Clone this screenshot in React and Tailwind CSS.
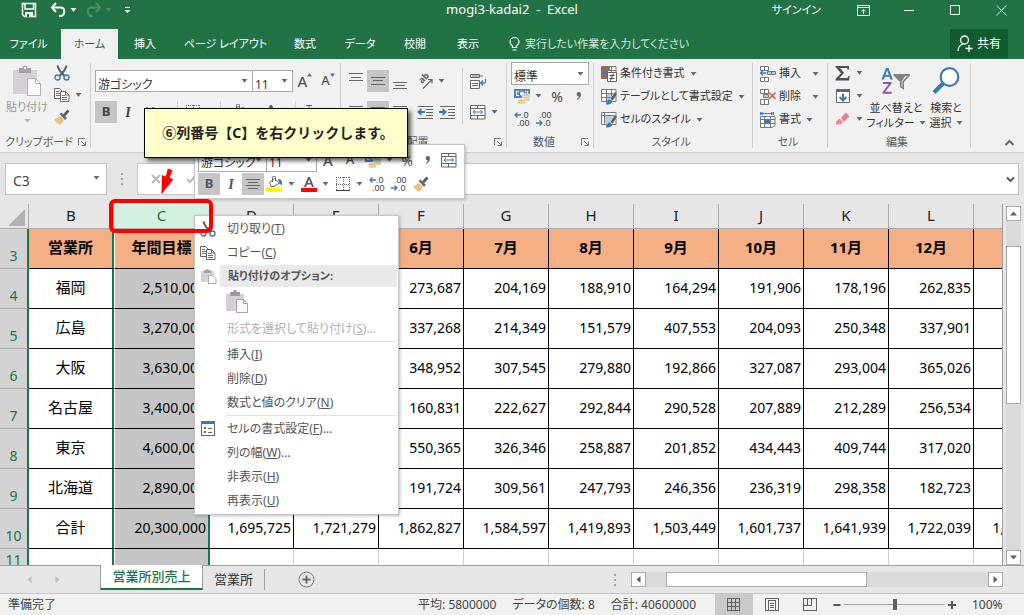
import React from "react";

const GRAY = "#666666";
const BLUE = "#3c7ab5";

/* ---------- icons ---------- */

function Caret({ color = "#6a6a6a", className = "" }) {
  return (
    <svg width="7" height="4" viewBox="0 0 7 4" className={"shrink-0 " + className} aria-hidden="true">
      <path d="M0.5 0h6L3.5 3.8z" fill={color} />
    </svg>
  );
}

function Svg({ w = 16, h = 16, children, className = "", crisp = false }) {
  return (
    <svg
      width={w}
      height={h}
      viewBox={`0 0 ${w} ${h}`}
      fill="none"
      className={"shrink-0 " + className}
      shapeRendering={crisp ? "crispEdges" : "auto"}
      aria-hidden="true"
    >
      {children}
    </svg>
  );
}

const CutIcon = () => (
  <Svg>
    <path d="M3.5 0.5C4 3 6 6.500 10.500 11M12.500 0.500C12 3 10 6.500 5.500 11" stroke="#606060" strokeWidth="2" />
    <circle cx="3.500" cy="12.500" r="2.500" stroke={BLUE} strokeWidth="1.400" />
    <circle cx="12.500" cy="12.500" r="2.500" stroke={BLUE} strokeWidth="1.400" />
  </Svg>
);

const CopyIcon = () => (
  <Svg>
    <path d="M0.500 1.500h5l3 3v7h-8z" fill="#fff" stroke={GRAY} />
    <path d="M2 4.500h3M2 6.500h4M2 8.500h4" stroke={BLUE} />
    <path d="M6.500 4.500h5l3.500 3.500v6.500h-8.500z" fill="#fff" stroke={GRAY} />
    <path d="M11.500 4.500v3.500h3.500" stroke={GRAY} />
    <path d="M8 8.500h3M8 10.500h5M8 12.500h5" stroke={BLUE} />
  </Svg>
);

const PainterIcon = () => (
  <Svg>
    <path d="M0 10c2.500 0 4-1.500 5.500-3.500l4.500 4.500-3.500 5C4 15 1.500 13 0 10z" fill="#edc07d" />
    <path d="M5.500 5l2-1.500 5.500 5.500-2 2z" fill="#6a6a6a" />
    <path d="M9 5.500L13.500 0.500l2 2L11 7.500z" fill="#5b5b5b" />
  </Svg>
);

const PasteIcon = () => (
  <Svg w={30} h={32}>
    <path d="M1 5h24v24H1z" fill="#d5d0d5" />
    <path d="M7 3h3.500a2.500 2.500 0 0 1 5 0H19v5H7z" fill="#a3a3a3" />
    <circle cx="13" cy="3" r="1.300" fill="#f0f0f0" />
    <path d="M15.500 13.500h8l5 5v12h-13z" fill="#faf8fb" stroke="#b5b1b5" />
    <path d="M23.500 13.500v5h5" stroke="#b5b1b5" />
  </Svg>
);

const PasteMedIcon = () => (
  <Svg w={22} h={24}>
    <path d="M0 4h18v17H0z" fill="#d5d0d5" />
    <path d="M4 2h3a2 2 0 0 1 4 0h3v4H4z" fill="#9b9b9b" />
    <path d="M10.500 9.500h7l4 4v9h-11z" fill="#faf8fb" stroke="#aaa6aa" />
    <path d="M17.500 9.500v4h4" stroke="#aaa6aa" />
  </Svg>
);

const PasteSmallIcon = () => (
  <Svg>
    <path d="M0 3h13v11H0z" fill="#d5d0d5" />
    <path d="M3 2h2.500a1 1 0 0 1 2 0H10v3H3z" fill="#a3a3a3" />
    <path d="M7.500 7.500h4l3.500 3v5h-7.500z" fill="#fff" stroke="#aaa6aa" />
  </Svg>
);

function LinesIcon({ rows }) {
  return (
    <Svg crisp>
      {rows.map(([x, y, w]) => (
        <rect key={y} x={x} y={y} width={w} height="1" fill="#666" />
      ))}
    </Svg>
  );
}
const TopAlign = () => <LinesIcon rows={[[1, 0, 14], [3, 4, 10], [1, 7, 14]]} />;
const MidAlign = () => <LinesIcon rows={[[1, 4, 14], [3, 7, 10], [1, 11, 14]]} />;
const BottomAlign = () => <LinesIcon rows={[[1, 9, 14], [3, 12, 10], [1, 15, 14]]} />;
const LeftAlign = () => <LinesIcon rows={[[1, 2, 14], [1, 5, 10], [1, 8, 14], [1, 11, 10], [1, 14, 14]]} />;
const CenterAlign = () => <LinesIcon rows={[[1, 3, 14], [3, 6, 10], [1, 9, 14], [3, 12, 10]]} />;
const RightAlign = () => <LinesIcon rows={[[1, 2, 14], [5, 5, 10], [1, 8, 14], [5, 11, 10], [1, 14, 14]]} />;

const IndentIcon = ({ right = false }) => (
  <Svg>
    <path d="M1 2.500h15M9 5.500h7M9 8.500h7M9 11.500h7M1 14.500h15" stroke={GRAY} />
    {right ? (
      <path d="M0 7h3.500V4l4.500 4-4.500 4V9H0z" fill={BLUE} />
    ) : (
      <path d="M8 7H4.500V4L0 8l4.500 4V9H8z" fill={BLUE} />
    )}
  </Svg>
);

const OrientationIcon = () => (
  <Svg>
    <text x="0" y="0" fontSize="9" fontFamily="Noto Sans" fontWeight="bold" fill="#606060" transform="translate(5 11) rotate(-45)">
      ab
    </text>
    <path d="M6 15.500L14.500 7M11 6.500h4v4" stroke={GRAY} strokeWidth="1.200" />
  </Svg>
);

const WrapIcon = () => (
  <Svg>
    <path d="M0.500 1.500h9v3h-9zM0.500 7.500h9v8h-9z" stroke={GRAY} fill="#fff" />
    <path d="M2 3h11M2 10.500h6M2 12.500h6" stroke={BLUE} />
    <path d="M15.500 6v2.500q0 1.500-2 1.500H11M13 7.500L10.500 10l2.500 2.500" stroke={BLUE} strokeWidth="1.300" />
  </Svg>
);

const MergeIcon = () => (
  <Svg>
    <path d="M0.500 1.500h14.500v13.500H0.500zM0.500 4.500h14.500M0.500 11.500h14.500M7.500 1.500v3M7.500 11.500v3.500" stroke={GRAY} fill="#fff" />
    <path d="M3 8h9.500M5 6L3 8l2 2M10.500 6l2 2-2 2" stroke={BLUE} />
  </Svg>
);

const CommaIcon = () => (
  <Svg w={8} h={10}>
    <path d="M3.800 1a2.200 2.200 0 0 1 2.200 2.300C6 6 4.500 7.800 2.300 8.800L1.800 7.800C3 7.200 3.700 6.400 3.900 5.400A2.200 2.200 0 0 1 3.800 1z" fill="#666" />
  </Svg>
);

const CurrencyIcon = () => (
  <Svg>
    <path d="M0 1h16v9H0z" fill="#4a86c5" />
    <path d="M2 3h3v1H3v3h2v1H2zM14 3h-3v1h2v1h1z" fill="#fff" />
    <circle cx="8" cy="5.500" r="2" fill="#fff" />
    <g fill="#edc07d" stroke="#f1f1f1" strokeWidth="0.700">
      <ellipse cx="12" cy="11.500" rx="4" ry="1.600" />
      <ellipse cx="12" cy="9.300" rx="4" ry="1.600" />
      <ellipse cx="12" cy="7.200" rx="4" ry="1.600" />
      <ellipse cx="7.500" cy="14.500" rx="4" ry="1.500" />
      <ellipse cx="7.500" cy="12.500" rx="4" ry="1.500" />
    </g>
  </Svg>
);

const DecimalIcon = ({ less = false }) => (
  <Svg>
    <g fontFamily="Liberation Sans" fontSize="9" fill="#444">
      <text x={less ? 3 : 7} y="7">{less ? ".00" : ".0"}</text>
      <text x={less ? 7 : 3} y="15">{less ? ".0" : ".00"}</text>
    </g>
    {less ? (
      <path d="M0 12h6M3.500 9.500L6 12l-2.500 2.500" stroke={BLUE} strokeWidth="1.300" />
    ) : (
      <path d="M1 4h6M3.500 1.500L1 4l2.500 2.500" stroke={BLUE} strokeWidth="1.300" />
    )}
  </Svg>
);

const BorderIcon = () => (
  <Svg crisp>
    <path d="M1 1.500h14M1 8.500h14M1.500 1v13M8.500 1v13M14.500 1v13" stroke={GRAY} strokeDasharray="1 1" />
    <path d="M1 14.500h14" stroke="#444" />
  </Svg>
);

const BucketIcon = () => (
  <Svg w={17}>
    <path d="M3.500 6.500l5-4 5 4.500-5.500 3.500H5z" fill="#fff" stroke={GRAY} />
    <path d="M6.500 6V1.500a1.500 1.500 0 0 1 3 0V5" stroke={GRAY} />
    <path d="M12 3c3 0 4.500 2 4 6l-2.500-1z" fill={BLUE} />
    <path d="M0 12h16v4H0z" fill="#ffff00" />
  </Svg>
);

const FontColorIcon = () => (
  <Svg>
    <path d="M3 11L7 1h2l4 10h-2l-1-2.500H6L5 11zM6.700 7h2.700L8 3.300z" fill="#5a5a5a" />
    <path d="M0 12h16v4H0z" fill="#ff0000" />
  </Svg>
);

const RubyIcon = () => (
  <Svg>
    <path d="M6 1.500h6M5 4.500h7M9 1v3" stroke={GRAY} />
    <path d="M3 8h10M8 6v9M4 14l4-4 4 4" stroke={GRAY} />
  </Svg>
);

const GridBase = () => (
  <>
    <path d="M0.500 0.500h14v12H0.500z" fill="#fff" />
    <path d="M0.500 0.500h14.500v12H0.500zM0.500 4.500h14.500M0.500 8.500h14.500M5.500 0.500v12M10.500 0.500v12" stroke="#777" />
  </>
);

const ConditionalIcon = () => (
  <Svg>
    <GridBase />
    <path d="M1 1h8v3H1zM1 9h4v3H1z" fill="#d8512f" />
    <path d="M1 5h6v3H1z" fill={BLUE} />
    <path d="M6.500 6.500h9v9h-9z" fill="#fff" stroke={GRAY} />
    <path d="M8.500 9.500h5M8.500 12.500h5M12.500 7.500l-3 7" stroke="#444" />
  </Svg>
);

const BrushOverlay = () => (
  <>
    <path d="M5 15.500c0-3 1.500-5 4-5l2 2c0 2-2.500 3.500-6 3z" fill={BLUE} />
    <path d="M9 10L14 2.500l2 1.500v2L11.500 12z" fill="#606060" stroke="#f1f1f1" strokeWidth="0.600" />
  </>
);

const TableStyleIcon = () => (
  <Svg>
    <GridBase />
    <path d="M6 5h4v3H6zM6 9h4v3H6zM11 5h4v3h-4z" fill="#b4cde6" />
    <BrushOverlay />
  </Svg>
);

const CellStyleIcon = () => (
  <Svg>
    <path d="M0.500 0.500h14.500v12H0.500z" fill="#fff" stroke="#777" />
    <path d="M0.500 3.500h14.500M3.500 0.500v12" stroke="#777" />
    <path d="M4 4h9v7H4z" fill="#b4cde6" />
    <BrushOverlay />
  </Svg>
);

const InsertCellIcon = () => (
  <Svg>
    <path d="M0.500 0.500h8v4h-8zM4.500 0.500v4M0.500 11.500h8v4h-8zM4.500 11.500v4" stroke="#777" fill="#fff" />
    <path d="M7.500 5.500h8v3h-8zM11.500 5.500v3" stroke="#777" fill="#b4cde6" />
    <path d="M6.500 7h-6M3 4.500L0.500 7 3 9.500" stroke={BLUE} strokeWidth="1.500" />
  </Svg>
);

const DeleteCellIcon = () => (
  <Svg>
    <path d="M0.500 0.500h8v4h-8zM4.500 0.500v4M0.500 10.500h8v5h-8zM4.500 10.500v5" stroke="#777" fill="#fff" />
    <path d="M3.500 5.500h5v3h-5z" stroke="#777" fill="#b4cde6" />
    <path d="M9 3.500l6.500 6.500M15.500 3.500L9 10" stroke="#d8623f" strokeWidth="1.600" />
  </Svg>
);

const FormatCellIcon = () => (
  <Svg>
    <path d="M1 1.500h12M3 0L1 1.500 3 3M11 0l2 1.500L11 3M0.500 0v3M13.500 0v3" stroke={BLUE} />
    <path d="M0.500 4.500h14.500v9l-3 2H0.500zM0.500 7.500h14.500M0.500 11.500h14.500M4.500 4.500v11M10.500 4.500v11" stroke="#777" fill="#fff" />
    <path d="M4 7h6v4H4z" fill={BLUE} />
  </Svg>
);

const SigmaIcon = () => (
  <Svg>
    <path d="M0.500 1H14v3.500h-1.200L12 3H5l4 4.700L4.500 13H12.500l1-2h1.200L14 15.500H0.500V14L6 8.200 0.500 2z" fill="#4f4f4f" />
  </Svg>
);

const FillIcon = () => (
  <Svg>
    <path d="M1.500 1.500h13v13h-13z" fill="#fff" stroke={GRAY} />
    <path d="M1 1h14v3H1z" fill={GRAY} />
    <path d="M8 5.500v7M4.500 9L8 12.500 11.500 9" stroke={BLUE} strokeWidth="2" />
  </Svg>
);

const EraserIcon = () => (
  <Svg>
    <path d="M6 6.500L11 1.500l3.500 4L8.500 11z" fill="#e67d92" />
    <path d="M4.500 7.500l3.500 4L5.500 13.500 1 13.500v-3z" fill="#e9899c" />
  </Svg>
);

const SortIcon = () => (
  <Svg w={30} h={28}>
    <path d="M0.500 12.500L5 1h2.400l4.400 11.500H9.400l-1-2.800H3.900l-1 2.800zM4.500 8h3.300L6.200 3.200z" fill={BLUE} />
    <path d="M2 15h8.500v1.500L4.200 24.800h6.500v2H1.500v-1.600l6.200-8.200H2z" fill="#9152b8" />
    <path d="M12.500 7h16.500v1.500L23 15v8l-4-3v-5l-6.500-6.500z" fill="#808080" />
    <path d="M20.500 14.500v5l1 1v-6l5-5.500h-2.500z" fill="#d9d9d9" />
  </Svg>
);

const FindIcon = () => (
  <Svg w={28} h={28}>
    <circle cx="17.500" cy="10" r="8.800" fill="#fff" stroke={BLUE} strokeWidth="2.200" />
    <path d="M11 16.500L2 25.500" stroke={BLUE} strokeWidth="4" />
  </Svg>
);

const Launcher = ({ label }) => (
  <button type="button" aria-label={label} className="shrink-0">
    <Svg w={8} h={8}>
      <path d="M0.500 7V0.500H7" stroke="#777" />
      <path d="M3 3l4 4M7.500 3.500v4h-4" stroke="#777" />
    </Svg>
  </button>
);

/* ---------- shared controls ---------- */

function IconButton({ label, active, caret, className = "", children }) {
  return (
    <button
      type="button"
      aria-label={label}
      className={
        "flex h-[22px] shrink-0 items-center justify-center " + (active ? "bg-[#c5c5c5] " : "") + className
      }
    >
      {children}
      {caret && <Caret className="ml-[5px]" />}
    </button>
  );
}

function Combo({ label, value, className = "" }) {
  return (
    <div className={"relative shrink-0 border border-[#ababab] bg-white " + className}>
      <select aria-label={label} className="h-full w-full appearance-none pb-[3px] pl-[2px] text-[12px] text-[#333] outline-none">
        <option>{value}</option>
      </select>
      <Caret className="pointer-events-none absolute top-1/2 right-[4px] -mt-[2px]" />
    </div>
  );
}

function Group({ label, launcher, className = "", children }) {
  return (
    <section aria-label={label} className={"flex shrink-0 flex-col " + className}>
      <div className="h-[73px] shrink-0">{children}</div>
      <div className="flex h-5 items-center pr-1 text-[11px] text-[#5c5c5c]">
        <span className="flex-1 text-center whitespace-nowrap">{label}</span>
        {launcher && <Launcher label={label + "の設定"} />}
      </div>
    </section>
  );
}

const Divider = () => <div className="my-1 w-px shrink-0 bg-[#d0d0d0]" />;

function TextButton({ icon, text, textWidth = "", caret = true }) {
  return (
    <button type="button" className="flex h-[23px] items-center text-[11px] whitespace-nowrap text-[#333]">
      {icon}
      <span className={"ml-[3px] text-left " + textWidth}>{text}</span>
      {caret && <Caret className="ml-[5px]" />}
    </button>
  );
}

/* ---------- title bar and tabs ---------- */

function TitleBar() {
  return (
    <header className="grid h-[29px] shrink-0 grid-cols-[1fr_auto_1fr] bg-[#217346] pb-[9px] text-white">
      <div className="flex items-center pl-[21px]">
        <button type="button" aria-label="上書き保存">
          <Svg>
            <path d="M1.500 1.500h13v13H3.500l-2-2zM4 2v5h8.500V2" stroke="#fff" strokeWidth="1.500" />
            <path d="M4 10h8v5H4z" fill="#fff" />
            <path d="M6 12h2v3H6z" fill="#217346" />
          </Svg>
        </button>
        <button type="button" aria-label="元に戻す" className="ml-[13px] flex items-center">
          <Svg>
            <path d="M2 5.500h8.500c5 0 5 7.500 0 8.500H9" stroke="#fff" strokeWidth="2" />
            <path d="M6 1L2 5.500 6 10" stroke="#fff" strokeWidth="2" />
          </Svg>
          <Caret color="#fff" className="ml-[4px]" />
        </button>
        <button type="button" aria-label="やり直し" disabled className="ml-[9px] flex items-center">
          <Svg>
            <path d="M14 5.500H5.500c-5 0-5 7.500 0 8.500H7" stroke="#4c9069" strokeWidth="2" />
            <path d="M10 1l4 4.500L10 10" stroke="#4c9069" strokeWidth="2" />
          </Svg>
          <Caret color="#4c9069" className="ml-[3px]" />
        </button>
        <button type="button" aria-label="クイック アクセス ツール バーのカスタマイズ" className="ml-3">
          <Svg w={7} h={8}>
            <path d="M1 1.500h5" stroke="#fff" />
            <path d="M0.500 4h6L3.500 7z" fill="#fff" />
          </Svg>
        </button>
      </div>
      <h1 className="flex items-center text-[13px] whitespace-pre">mogi3-kadai2  -  Excel</h1>
      <div className="flex items-center justify-end pr-[17px]">
        <button type="button" className="mr-9 text-[11px]">サインイン</button>
        <button type="button" aria-label="リボンの表示オプション" className="mr-[34px]">
          <Svg w={13} h={11}>
            <path d="M0.500 0.500h12v10H0.500zM0.500 2.500h12M6.500 9V4.500M4.500 6.500l2-2 2 2" stroke="#fff" />
          </Svg>
        </button>
        <button type="button" aria-label="最小化" className="mr-9">
          <Svg w={10} h={10}><path d="M0 5.500h10" stroke="#fff" /></Svg>
        </button>
        <button type="button" aria-label="最大化" className="mr-9">
          <Svg w={10} h={10}><path d="M0.500 0.500h9v9h-9z" stroke="#fff" /></Svg>
        </button>
        <button type="button" aria-label="閉じる">
          <Svg w={11} h={11}><path d="M0.500 0.500l10 10M10.500 0.500l-10 10" stroke="#fff" /></Svg>
        </button>
      </div>
    </header>
  );
}

const TABS = [
  ["ファイル", "w-[61px] pr-1"],
  ["ホーム", "w-[57px]"],
  ["挿入", "w-[54px]"],
  ["ページ レイアウト", "w-[107px]"],
  ["数式", "w-[52px]"],
  ["データ", "w-[58px]"],
  ["校閲", "w-[52px]"],
  ["表示", "w-[54px]"],
];

function RibbonTabs() {
  return (
    <nav aria-label="リボン タブ" className="flex h-[30px] shrink-0 bg-[#217346] text-[11px] text-white">
      {TABS.map(([name, width]) => (
        <button
          key={name}
          type="button"
          className={
            "shrink-0 whitespace-nowrap " + width + (name === "ホーム" ? " bg-[#f1f1f1] text-[#217346]" : "")
          }
        >
          {name}
        </button>
      ))}
      <button type="button" className="ml-[14px] flex items-center gap-[5px] whitespace-nowrap text-[#d9e9df]">
        <Svg w={11} h={15}>
          <path d="M3.500 10.500V9C1.500 7.500 1 6.500 1 5a4.500 4.500 0 0 1 9 0c0 1.500-0.500 2.500-2.500 4v1.500zM3.500 13h4" stroke="#fff" strokeWidth="1.200" />
        </Svg>
        実行したい作業を入力してください
      </button>
      <div className="flex-1" />
      <button type="button" className="mr-4 mb-px flex w-[58px] items-center justify-center gap-1 bg-[#0f5c2f] text-[12px]">
        <Svg w={16} h={17}>
          <circle cx="7.500" cy="5" r="4" stroke="#fff" strokeWidth="1.300" />
          <path d="M1 16c0-4 2-6 5-7M8.500 13.500h7M12 10v7" stroke="#fff" strokeWidth="1.300" />
        </Svg>
        共有
      </button>
    </nav>
  );
}

/* ---------- ribbon ---------- */

function BigButton({ icon, lines, className = "" }) {
  return (
    <button type="button" className={"flex flex-col items-center text-[11px] leading-[15px] whitespace-nowrap text-[#333] " + className}>
      {icon}
      <span className="mt-[5px]">{lines[0]}</span>
      <span className="flex items-center gap-1">
        {lines[1]}
        <Caret />
      </span>
    </button>
  );
}

function Ribbon() {
  return (
    <div className="flex h-[94px] shrink-0 border-b border-[#d0d0d0] bg-[#f1f1f1]">
      <Group label="クリップボード" launcher className="w-[90px]">
        <div className="flex pl-[5px]">
          <button type="button" disabled className="flex w-11 flex-col items-center pt-[6px] text-[11px] leading-4 whitespace-nowrap text-[#9b9b9b]">
            <PasteIcon />
            <span className="mt-[2px]">貼り付け</span>
            <Caret color="#b5b5b5" className="mt-[4px]" />
          </button>
          <div className="flex flex-col items-start pt-[3px] pl-[5px]">
            <IconButton label="切り取り"><CutIcon /></IconButton>
            <IconButton label="コピー" caret><CopyIcon /></IconButton>
            <IconButton label="書式のコピー/貼り付け"><PainterIcon /></IconButton>
          </div>
        </div>
      </Group>
      <Divider />
      <Group label="フォント" launcher className="w-[249px]">
        <div className="flex flex-col gap-[9px] pt-[11px] pl-1">
          <div className="flex h-[22px]">
            <Combo label="フォント" value="游ゴシック" className="w-[158px]" />
            <Combo label="フォント サイズ" value="11" className="-ml-px w-[41px]" />
            <IconButton label="フォント サイズの拡大" className="ml-[3px] w-[18px] text-[15px] font-medium text-[#555]">
              A
              <Svg w={5} h={4} className="mb-3"><path d="M0 3.500L2.500 0 5 3.500z" fill={BLUE} /></Svg>
            </IconButton>
            <IconButton label="フォント サイズの縮小" className="ml-[5px] w-[18px] text-[13px] font-medium text-[#555]">
              A
              <Svg w={5} h={4} className="mb-3"><path d="M0 0.500h5L2.500 4z" fill={BLUE} /></Svg>
            </IconButton>
          </div>
          <div className="flex h-[22px] items-center text-[#444]">
            <IconButton label="太字" active className="w-[22px] text-[13px] font-bold">B</IconButton>
            <IconButton label="斜体" className="w-[22px] font-serif text-[14px] font-bold italic">I</IconButton>
            <IconButton label="下線" caret className="w-[34px] text-[13px] underline">U</IconButton>
            <div className="ml-1 h-[22px] w-px bg-[#d5d5d5]" />
            <IconButton label="罫線" caret className="ml-[7px]"><BorderIcon /></IconButton>
            <div className="ml-[7px] h-[22px] w-px bg-[#d5d5d5]" />
            <IconButton label="塗りつぶしの色" caret className="ml-[9px]"><BucketIcon /></IconButton>
            <IconButton label="フォントの色" caret className="ml-1"><FontColorIcon /></IconButton>
            <div className="ml-1 h-[22px] w-px bg-[#d5d5d5]" />
            <IconButton label="ふりがな" caret className="ml-1"><RubyIcon /></IconButton>
          </div>
        </div>
      </Group>
      <Divider />
      <Group label="配置" launcher className="w-[165px]">
        <div className="flex pl-1">
          <div className="flex w-[117px] flex-col gap-[9px] pt-[11px]">
            <div className="flex">
              <IconButton label="上揃え" className="w-[22px]"><TopAlign /></IconButton>
              <IconButton label="上下中央揃え" active className="w-[22px]"><MidAlign /></IconButton>
              <IconButton label="下揃え" className="w-[22px]"><BottomAlign /></IconButton>
              <IconButton label="方向" caret className="ml-[6px]"><OrientationIcon /></IconButton>
            </div>
            <div className="flex">
              <IconButton label="左揃え" className="w-[22px]"><LeftAlign /></IconButton>
              <IconButton label="中央揃え" active className="w-[22px]"><CenterAlign /></IconButton>
              <IconButton label="右揃え" className="w-[22px]"><RightAlign /></IconButton>
              <IconButton label="インデントを減らす" className="ml-[3px] w-[22px]"><IndentIcon /></IconButton>
              <IconButton label="インデントを増やす" className="w-[22px]"><IndentIcon right /></IconButton>
            </div>
          </div>
          <div className="mt-[9px] h-14 w-px bg-[#d5d5d5]" />
          <div className="flex flex-col gap-[9px] pt-[11px] pl-[7px]">
            <IconButton label="折り返して全体を表示する" className="w-4"><WrapIcon /></IconButton>
            <IconButton label="セルを結合して中央揃え" caret><MergeIcon /></IconButton>
          </div>
        </div>
      </Group>
      <Divider />
      <Group label="数値" launcher className="w-[86px]">
        <div className="flex flex-col pt-[3px] pl-1 text-[#444]">
          <Combo label="表示形式" value="標準" className="h-[23px] w-[78px]" />
          <div className="flex">
            <IconButton label="通貨表示形式" caret className="ml-[3px]"><CurrencyIcon /></IconButton>
            <IconButton label="パーセント スタイル" className="ml-[4px] w-[22px] text-[14px]">%</IconButton>
            <IconButton label="桁区切りスタイル" className="w-[22px]"><CommaIcon /></IconButton>
          </div>
          <div className="mt-px flex">
            <IconButton label="小数点以下の表示桁数を増やす" className="w-[22px]"><DecimalIcon /></IconButton>
            <IconButton label="小数点以下の表示桁数を減らす" className="w-[22px]"><DecimalIcon less /></IconButton>
          </div>
        </div>
      </Group>
      <Divider />
      <Group label="スタイル" className="w-[158px]">
        <div className="flex flex-col items-start pt-[3px] pl-[7px]">
          <TextButton icon={<ConditionalIcon />} text="条件付き書式" />
          <TextButton icon={<TableStyleIcon />} text="テーブルとして書式設定" />
          <TextButton icon={<CellStyleIcon />} text="セルのスタイル" />
        </div>
      </Group>
      <Divider />
      <Group label="セル" className="w-[74px]">
        <div className="flex flex-col items-start pt-[3px] pl-[7px]">
          <TextButton icon={<InsertCellIcon />} text="挿入" textWidth="w-[28px]" />
          <TextButton icon={<DeleteCellIcon />} text="削除" textWidth="w-[28px]" />
          <TextButton icon={<FormatCellIcon />} text="書式" textWidth="w-[22px]" />
        </div>
      </Group>
      <Divider />
      <Group label="編集" className="w-[142px]">
        <div className="flex pl-[7px]">
          <div className="flex flex-col gap-px pt-[3px]">
            <IconButton label="オート SUM" caret><SigmaIcon /></IconButton>
            <IconButton label="フィル" caret><FillIcon /></IconButton>
            <IconButton label="クリア" caret><EraserIcon /></IconButton>
          </div>
          <BigButton icon={<SortIcon />} lines={["並べ替えと", "フィルター"]} className="ml-[6px] w-[54px] pt-2" />
          <BigButton icon={<FindIcon />} lines={["検索と", "選択"]} className="ml-[5px] w-[36px] pt-2" />
        </div>
      </Group>
      <Divider />
      <div className="flex flex-1 items-end justify-end pr-[9px] pb-[6px]">
        <button type="button" aria-label="リボンを折りたたむ">
          <Svg w={11} h={7}><path d="M1.500 6L5.500 2l4 4" stroke="#666" strokeWidth="2" /></Svg>
        </button>
      </div>
    </div>
  );
}

/* ---------- formula bar ---------- */

function FormulaBar() {
  return (
    <div className="flex h-[51px] shrink-0 bg-[#e6e6e6] pt-[10px] pr-[5px] pb-[9px] pl-[5px]">
      <div className="relative w-[102px] shrink-0 border border-[#c6c6c6] bg-white">
        <input aria-label="名前ボックス" defaultValue="C3" className="h-full w-full pt-[2px] pl-[7px] text-[14px] text-[#444] outline-none" />
        <Caret className="pointer-events-none absolute top-[12px] right-[6px]" />
      </div>
      <div className="flex w-[30px] items-center justify-center">
        <Svg w={2} h={12} crisp><path d="M0 0h2v2H0zM0 5h2v2H0zM0 10h2v2H0z" fill="#a6a6a6" /></Svg>
      </div>
      <div className="mr-1 flex w-[96px] shrink-0 items-center gap-[26px] border border-[#c6c6c6] bg-white pl-[13px]">
        <button type="button" aria-label="キャンセル"><Svg w={10} h={10}><path d="M1 1l8 8M9 1L1 9" stroke="#b9b9b9" strokeWidth="2" /></Svg></button>
        <button type="button" aria-label="入力"><Svg w={10} h={10}><path d="M0 5l3 3 6-7" stroke="#b9b9b9" strokeWidth="2" /></Svg></button>
      </div>
      <div className="relative flex-1 border border-[#c6c6c6] bg-white">
        <input aria-label="数式バー" className="h-full w-full pr-6 pl-2 outline-none" />
        <Svg w={9} h={7} className="pointer-events-none absolute top-[12px] right-[3px]">
          <path d="M1 1.500L4.500 5 8 1.500" stroke="#5a5a5a" strokeWidth="2" />
        </Svg>
      </div>
    </div>
  );
}

/* ---------- worksheet ---------- */

const COLS = ["B", "C", "D", "E", "F", "G", "H", "I", "J", "K", "L", ""];
const HEAD = ["営業所", "年間目標", "4月", "5月", "6月", "7月", "8月", "9月", "10月", "11月", "12月", ""];
const ROWS = [
  [4, "福岡", "2,510,000", "", "", "273,687", "204,169", "188,910", "164,294", "191,906", "178,196", "262,835", ""],
  [5, "広島", "3,270,000", "", "", "337,268", "214,349", "151,579", "407,553", "204,093", "250,348", "337,901", ""],
  [6, "大阪", "3,630,000", "", "", "348,952", "307,545", "279,880", "192,866", "327,087", "293,004", "365,026", ""],
  [7, "名古屋", "3,400,000", "", "", "160,831", "222,627", "292,844", "290,528", "207,889", "212,289", "256,534", ""],
  [8, "東京", "4,600,000", "", "", "550,365", "326,346", "258,887", "201,852", "434,443", "409,744", "317,020", ""],
  [9, "北海道", "2,890,000", "", "", "191,724", "309,561", "247,793", "246,356", "236,319", "298,358", "182,723", ""],
  [10, "合計", "20,300,000", "1,695,725", "1,721,279", "1,862,827", "1,584,597", "1,419,893", "1,503,449", "1,601,737", "1,641,939", "1,722,039", "1,700,000"],
];

const colEdge = (i) =>
  i < 2 ? "border-r-2 border-r-[#217346] " : "border-r border-r-black ";

function RowHead({ n }) {
  return (
    <th scope="row" className="border-r-2 border-b border-r-[#217346] border-b-[#ababab] bg-[#d3d3d3] pb-[2px] text-center align-bottom text-[14px] leading-5 font-normal text-[#217346]">
      {n}
    </th>
  );
}

function Sheet() {
  return (
    <table className="w-[1059px] table-fixed border-separate border-spacing-0 text-black">
      <colgroup>
        <col className="w-[29px]" />
        <col className="w-[85px]" />
        <col className="w-[96px]" />
        <col className="w-[84px]" />
        {COLS.slice(3).map((c, i) => (
          <col key={i} className="w-[85px]" />
        ))}
      </colgroup>
      <thead>
        <tr className="h-[25px]">
          <td className="border-r border-b border-[#ababab] p-0">
            <Svg w={20} h={20} className="mt-[3px] ml-[7px]"><path d="M18 1v17H1z" fill="#b2b2b2" /></Svg>
          </td>
          {COLS.map((c, i) => (
            <th
              key={i}
              scope="col"
              className={
                "border-r border-b border-[#ababab] p-0 pb-[2px] text-center text-[15px] leading-5 font-normal " +
                (c === "C" ? "bg-[#d3f0e0] text-[#217346]" : "text-[#222]")
              }
            >
              {c}
            </th>
          ))}
        </tr>
      </thead>
      <tbody>
        <tr className="h-10">
          <RowHead n={3} />
          {HEAD.map((t, i) => (
            <th key={i} scope="col" className={"border-b border-b-black bg-[#f4b084] p-0 pb-[2px] text-center text-[15px] font-bold " + colEdge(i) + (i === 1 ? "border-l border-l-white" : "")}>
              {t}
            </th>
          ))}
        </tr>
        {ROWS.map(([n, name, ...vals]) => (
          <tr key={n} className="h-10">
            <RowHead n={n} />
            <td className={"border-b border-b-black bg-white p-0 pb-[2px] text-center text-[15px] " + colEdge(0)}>{name}</td>
            {vals.map((v, i) => (
              <td
                key={i}
                className={
                  "border-b border-b-black p-0 pr-[2px] pb-[2px] text-right text-[14px] whitespace-nowrap " +
                  colEdge(i + 1) +
                  (i === 0 ? "border-l border-l-white bg-[#c6c6c6]" : "bg-white")
                }
              >
                {v}
              </td>
            ))}
          </tr>
        ))}
        <tr className="h-10">
          <th scope="row" className="border-r-2 border-r-[#217346] bg-[#d3d3d3] p-0 text-center align-top text-[14px] leading-[22px] font-normal text-[#217346]">
            11
          </th>
          {COLS.map((c, i) => (
            <td
              key={i}
              className={
                (i < 2 ? "border-r-2 border-r-[#217346] " : "border-r border-r-[#d0d0d0] ") +
                (i === 1 ? "border-l border-l-white bg-[#c6c6c6]" : "bg-white")
              }
            />
          ))}
        </tr>
      </tbody>
    </table>
  );
}

function ScrollButton({ label, d, className = "" }) {
  return (
    <button type="button" aria-label={label} className={"flex h-[15px] w-[15px] shrink-0 items-center justify-center border border-[#ababab] bg-white " + className}>
      <Svg w={7} h={7}><path d={d} fill="#606060" /></Svg>
    </button>
  );
}

function Workspace() {
  return (
    <div className="flex min-h-0 flex-1 bg-[#e6e6e6]">
      <div className="min-w-0 flex-1 overflow-hidden border-r border-r-[#9f9f9f]">
        <Sheet />
      </div>
      <div className="flex w-[21px] shrink-0 flex-col items-center pt-[2px]">
        <ScrollButton label="上へスクロール" d="M0 5.500h7L3.500 1.500z" />
        <div className="flex w-[15px] flex-1 flex-col bg-[#dadada] pt-[25px]">
          <div className="h-[158px] border border-[#ababab] bg-white" />
        </div>
        <ScrollButton label="下へスクロール" d="M0 1.500h7L3.500 5.500z" />
      </div>
    </div>
  );
}

function SheetTabs() {
  return (
    <div className="flex h-[28px] shrink-0 border-t border-[#9f9f9f] bg-[#e6e6e6] text-[13px]">
      <div className="flex w-[100px] shrink-0 items-center gap-[23px] pl-[27px]">
        <button type="button" aria-label="前のシート"><Svg w={5} h={7}><path d="M4.500 0v7L0.500 3.500z" fill="#bcbcbc" /></Svg></button>
        <button type="button" aria-label="次のシート"><Svg w={5} h={7}><path d="M0.500 0v7L4.500 3.500z" fill="#bcbcbc" /></Svg></button>
      </div>
      <button type="button" className="-mt-px mb-[3px] w-[103px] shrink-0 border-r border-b-2 border-l border-r-[#9f9f9f] border-b-[#217346] border-l-[#9f9f9f] bg-white font-medium text-[#217346]">
        営業所別売上
      </button>
      <button type="button" className="my-[3px] w-[62px] shrink-0 border-r border-[#9f9f9f] text-[#333]">営業所</button>
      <button type="button" aria-label="新しいシート" className="ml-[33px]">
        <Svg w={17} h={17}>
          <circle cx="8.500" cy="8.500" r="7.500" stroke="#777" />
          <path d="M8.500 4.500v8M4.500 8.500h8" stroke="#666" strokeWidth="1.800" />
        </Svg>
      </button>
      <div className="flex flex-1 items-center justify-end pr-[15px]">
        <Svg w={2} h={12} crisp><path d="M0 0h2v2H0zM0 5h2v2H0zM0 10h2v2H0z" fill="#a6a6a6" /></Svg>
      </div>
      <div className="mr-[21px] flex w-[372px] items-center">
        <ScrollButton label="左へスクロール" d="M5.500 0v7L1.500 3.500z" />
        <div className="flex h-[15px] flex-1 bg-[#dadada] pl-5">
          <div className="w-[201px] border border-[#ababab] bg-white" />
        </div>
        <ScrollButton label="右へスクロール" d="M1.500 0v7l4-3.500z" />
      </div>
    </div>
  );
}

function StatusBar() {
  return (
    <footer className="flex h-[22px] shrink-0 items-center border-t border-[#c6c6c6] bg-[#f1f1f1] text-[12px] whitespace-pre text-[#444]">
      <span className="pl-2">準備完了</span>
      <div className="flex-1" />
      <span>平均: 5800000</span>
      <span className="ml-4">データの個数: 8</span>
      <span className="ml-4">合計: 40600000</span>
      <button type="button" aria-label="標準" className="ml-[19px] flex h-full w-[38px] items-center justify-center bg-[#c9c9c9]">
        <Svg w={14} h={14} crisp><path d="M0.500 0.500h12v12H0.500zM4.500 0.500v12M8.500 0.500v12M0.500 4.500h12M0.500 8.500h12" stroke="#606060" /></Svg>
      </button>
      <button type="button" aria-label="ページ レイアウト" className="flex h-full w-[38px] items-center justify-center">
        <Svg w={14} h={14} crisp><path d="M0.500 0.500h13v12H0.500zM3.500 2.500h7v10h-7zM5 5.500h4M5 7.500h4M5 9.500h4" stroke="#606060" /></Svg>
      </button>
      <button type="button" aria-label="改ページ プレビュー" className="flex h-full w-[38px] items-center justify-center">
        <Svg w={14} h={14} crisp><path d="M0.500 0.500h13v12H0.500zM0.500 7.500h8M4.500 0.500v7M8.500 0.500v7" stroke="#606060" /></Svg>
      </button>
      <button type="button" aria-label="縮小" className="ml-[4px]"><Svg w={8} h={8}><path d="M0.500 4h7" stroke="#555" strokeWidth="2" /></Svg></button>
      <input
        type="range"
        aria-label="ズーム"
        min="0"
        max="100"
        defaultValue="50"
        className="mx-[3px] h-3 w-[101px] appearance-none bg-[linear-gradient(#a6a6a6,#a6a6a6)] bg-[length:100%_1px] bg-center bg-no-repeat [&::-webkit-slider-thumb]:h-[11px] [&::-webkit-slider-thumb]:w-1 [&::-webkit-slider-thumb]:appearance-none [&::-webkit-slider-thumb]:bg-[#606060]"
      />
      <button type="button" aria-label="拡大"><Svg w={8} h={8}><path d="M0 4h8M4 0v8" stroke="#555" strokeWidth="2" /></Svg></button>
      <span className="w-[68px] pl-4">100%</span>
    </footer>
  );
}

/* ---------- floating layers ---------- */

function MiniToolbar() {
  return (
    <div role="toolbar" aria-label="ミニ ツール バー" className="absolute top-[144px] left-[194px] w-[271px] border border-[#c6c6c6] bg-white p-[3px] pb-[2px] text-[#555] shadow-[1px_1px_3px_rgba(0,0,0,0.2)]">
      <div className="flex h-6 items-center">
        <Combo label="フォント" value="游ゴシック" className="h-6 w-[69px]" />
        <Combo label="フォント サイズ" value="11" className="-ml-px h-6 w-[51px]" />
        <IconButton label="フォント サイズの拡大" className="w-[22px] text-[15px] font-medium">A</IconButton>
        <IconButton label="フォント サイズの縮小" className="w-[22px] text-[13px] font-medium">A</IconButton>
        <IconButton label="通貨表示形式" caret className="ml-1"><CurrencyIcon /></IconButton>
        <IconButton label="パーセント スタイル" className="ml-[3px] w-[22px] text-[14px]">%</IconButton>
        <IconButton label="桁区切りスタイル" className="w-5"><CommaIcon /></IconButton>
        <IconButton label="セルを結合して中央揃え" className="w-[22px]"><MergeIcon /></IconButton>
      </div>
      <div className="flex h-6 items-center">
        <IconButton label="太字" active className="h-6 w-[22px] text-[13px] font-bold">B</IconButton>
        <IconButton label="斜体" className="w-[22px] font-serif text-[14px] font-bold italic">I</IconButton>
        <IconButton label="中央揃え" active className="h-6 w-[22px]"><CenterAlign /></IconButton>
        <IconButton label="塗りつぶしの色" caret className="ml-[2px]"><BucketIcon /></IconButton>
        <IconButton label="フォントの色" caret className="ml-[6px]"><FontColorIcon /></IconButton>
        <IconButton label="罫線" caret className="ml-[6px]"><BorderIcon /></IconButton>
        <IconButton label="小数点以下の表示桁数を増やす" className="ml-[3px] w-[22px]"><DecimalIcon /></IconButton>
        <IconButton label="小数点以下の表示桁数を減らす" className="w-[22px]"><DecimalIcon less /></IconButton>
        <IconButton label="書式のコピー/貼り付け" className="w-[22px]"><PainterIcon /></IconButton>
      </div>
    </div>
  );
}

function MenuItem({ icon, text, accessKey, tail = "", disabled }) {
  return (
    <button type="button" role="menuitem" disabled={disabled} className={"flex h-6 w-full items-center whitespace-nowrap " + (disabled ? "text-[#b1b1b1]" : "text-[#555]")}>
      <span className="flex w-8 shrink-0 pl-[5px]">{icon}</span>
      <span>
        {text}(<u>{accessKey}</u>){tail}
      </span>
    </button>
  );
}

const MenuLine = () => <div className="mr-px ml-8 h-[2px] border-t border-[#e1e1e1]" />;

function ContextMenu() {
  return (
    <div role="menu" className="absolute top-[215px] left-[194px] w-[205px] border border-[#c6c6c6] bg-white pt-px pb-px text-[12px] shadow-[1px_1px_3px_rgba(0,0,0,0.25)]">
      <MenuItem icon={<CutIcon />} text="切り取り" accessKey="T" />
      <MenuItem icon={<CopyIcon />} text="コピー" accessKey="C" />
      <div className="flex h-[22px] items-center pr-px">
        <span className="flex w-[25px] shrink-0 pl-[6px]"><PasteSmallIcon /></span>
        <span className="flex h-full flex-1 items-center bg-[#e9e9e9] pl-2 text-[11px] font-bold text-[#555]">貼り付けのオプション:</span>
      </div>
      <button type="button" role="menuitem" aria-label="貼り付け" disabled className="flex h-[30px] items-center pl-[31px]">
        <PasteMedIcon />
      </button>
      <MenuItem text="形式を選択して貼り付け" accessKey="S" tail="..." disabled />
      <MenuLine />
      <MenuItem text="挿入" accessKey="I" />
      <MenuItem text="削除" accessKey="D" />
      <MenuItem text="数式と値のクリア" accessKey="N" />
      <MenuLine />
      <MenuItem
        icon={
          <Svg crisp>
            <path d="M1.500 1.500h13v13h-13z" fill="#fff" stroke={GRAY} />
            <path d="M1 0h14v3H1z" fill={BLUE} />
            <path d="M4 6h2v2H4zM4 10h2v2H4zM8 7h4v1H8zM8 11h4v1H8z" fill={GRAY} />
          </Svg>
        }
        text="セルの書式設定"
        accessKey="F"
        tail="..."
      />
      <MenuItem text="列の幅" accessKey="W" tail="..." />
      <MenuItem text="非表示" accessKey="H" />
      <MenuItem text="再表示" accessKey="U" />
    </div>
  );
}

function Callout() {
  return (
    <>
      <div className="pointer-events-none absolute top-[199px] left-[109px] h-[34px] w-[104px] rounded-[6px] border-4 border-[#ff0000]" />
      <Svg w={22} h={34} className="absolute top-[165px] left-[156px]">
        <path d="M11.500 3l5.500 2-3 7.500 4 1.500L5 30.500 5.500 9.500l4 1.500z" fill="#ff0000" stroke="#fff" strokeWidth="0.800" />
      </Svg>
      <div className="absolute top-[108px] left-[144px] flex h-[50px] w-[264px] items-center justify-center border border-black bg-[#ffffcc] pb-[2px] pl-1 text-[14px] font-bold whitespace-nowrap text-[#222] shadow-[3px_3px_4px_rgba(0,0,0,0.6)] [font-feature-settings:normal]">
        ⑥列番号【C】を右クリックします。
      </div>
    </>
  );
}

export default function App() {
  return (
    <div className="relative flex h-screen w-full flex-col overflow-hidden bg-[#e6e6e6] font-['Noto_Sans','Noto_Sans_CJK_JP',sans-serif] [font-feature-settings:'palt']">
      <TitleBar />
      <RibbonTabs />
      <Ribbon />
      <FormulaBar />
      <Workspace />
      <SheetTabs />
      <StatusBar />
      <MiniToolbar />
      <ContextMenu />
      <Callout />
    </div>
  );
}
